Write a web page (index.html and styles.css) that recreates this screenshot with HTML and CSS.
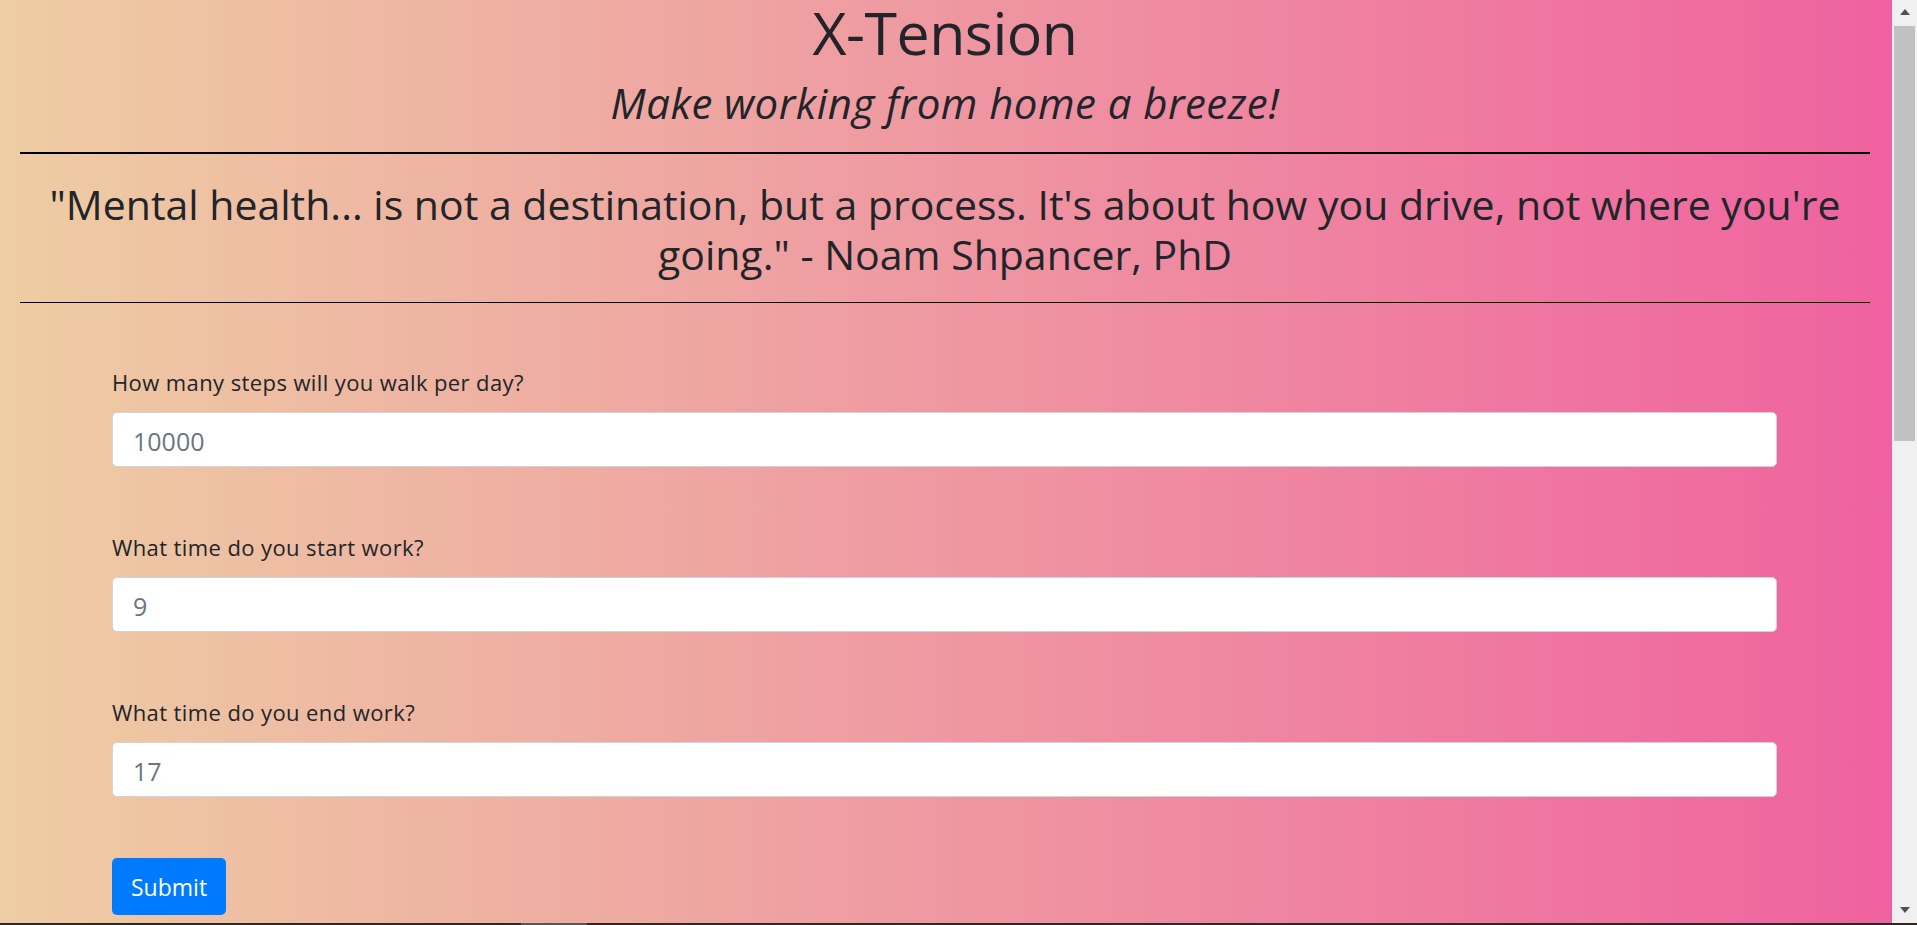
FILE: index.html
```html
<!DOCTYPE html>
<html lang="en">
<head>
  <meta charset="UTF-8" />
  <title>X-Tension</title>
  <link rel="stylesheet" href="styles.css">
</head>
<body>
  <div class="header">
    <h1 class="title">X-Tension</h1>
    <h3 class="tagline">Make working from home a breeze!</h3>
    <hr class="rule-top">
    <h2 class="quote">"Mental health... is not a destination, but a process. It's about how you drive, not where you're going." - Noam Shpancer, PhD</h2>
    <hr class="rule-bottom">
  </div>

  <form class="settings" onsubmit="return false;">
    <div class="form-group">
      <label for="steps">How many steps will you walk per day?</label>
      <input type="number" id="steps" class="form-control" placeholder="10000">
    </div>
    <div class="form-group">
      <label for="startTime">What time do you start work?</label>
      <input type="number" id="startTime" class="form-control" placeholder="9">
    </div>
    <div class="form-group">
      <label for="endTime">What time do you end work?</label>
      <input type="number" id="endTime" class="form-control" placeholder="17">
    </div>
    <button type="submit" class="btn-submit">Submit</button>
  </form>

  <!-- page scrollbar + window edge, drawn since the browser hides its own -->
  <div class="scrollbar" aria-hidden="true">
    <span class="arrow arrow-up"></span>
    <div class="thumb"></div>
    <span class="arrow arrow-down"></span>
  </div>
  <div class="window-edge" aria-hidden="true"></div>
</body>
</html>
```

FILE: styles.css
```css
html {
  background-color: #f0f0f0;
}

body {
  margin: 0 25px 0 0;
  padding-bottom: 1030px;
  font-family: 'Open Sans', sans-serif;
  color: #212529;
  background: linear-gradient(to right, #eecda3, #ef629f);
}

.header {
  padding: 0 22px 0 20px;
  text-align: center;
}

.title {
  margin: 0;
  font-size: 59px;
  font-weight: 500;
  letter-spacing: -0.5px;
  line-height: 64px;
}

.tagline {
  margin: 14px 0 0;
  font-size: 42px;
  font-style: italic;
  font-weight: 500;
  letter-spacing: 0.45px;
  line-height: 50px;
}

.rule-top {
  margin: 24px 0 0;
  border: 0;
  border-top: 2px solid #000;
}

.quote {
  margin: 25px 0 0;
  font-size: 41px;
  font-weight: 500;
  line-height: 50px;
}

.rule-bottom {
  margin: 23px 0 0;
  border: 0;
  border-top: 1px solid #000;
}

.settings {
  width: 1665px;
  margin: 63px 0 0 112px;
}

.form-group {
  margin-bottom: 64px;
}

.form-group label {
  display: block;
  margin-bottom: 13px;
  font-size: 22px;
  letter-spacing: 0.4px;
  line-height: 33px;
}

.form-control {
  display: block;
  width: 100%;
  height: 55px;
  padding: 2px 20px 0;
  font-family: inherit;
  font-size: 25px;
  color: #495057;
  background-color: #fff;
  border: 1px solid #ced4da;
  border-radius: 5px;
  box-sizing: border-box;
}

.form-control::placeholder {
  color: #6c757d;
}

.btn-submit {
  display: block;
  margin-top: -3px;
  height: 57px;
  padding: 0 19px;
  font-family: inherit;
  font-size: 23px;
  color: #fff;
  background-color: #007bff;
  border: 0;
  border-radius: 5px;
  cursor: pointer;
}

.scrollbar {
  position: fixed;
  top: 0;
  right: 0;
  width: 25px;
  height: 100vh;
  display: flex;
  flex-direction: column;
  align-items: center;
  background-color: #f0f0f0;
}

.arrow {
  width: 0;
  height: 0;
  border-left: 5.5px solid transparent;
  border-right: 5.5px solid transparent;
}

.arrow-up {
  margin: 9px 0 11px;
  border-bottom: 6px solid #505050;
}

.thumb {
  width: 21px;
  height: 415px;
  background-color: #c1c1c1;
}

.arrow-down {
  margin-top: auto;
  margin-bottom: 12px;
  border-top: 6px solid #505050;
}

.window-edge {
  position: fixed;
  left: 0;
  bottom: 0;
  width: 100%;
  height: 2px;
  background: linear-gradient(to right, #302624 521px, #575757 521px, #575757 587px, #302624 587px);
}
```
